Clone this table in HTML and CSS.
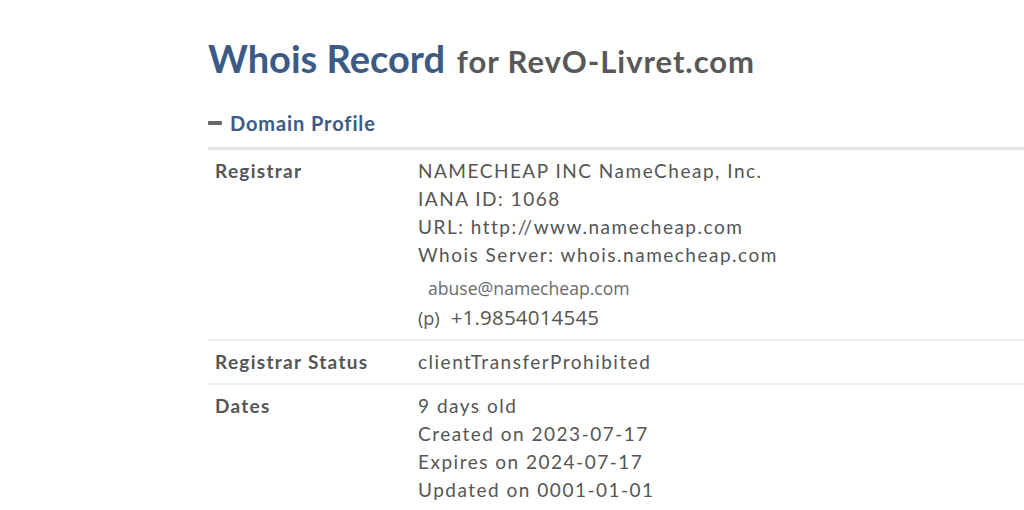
FILE: index.html
```html
<!DOCTYPE html>
<html>
<head>
<meta charset="utf-8">
<link rel="stylesheet" href="styles.css">
</head>
<body>
<div class="page">
  <h1 class="title"><span class="title-main">Whois Record</span> <span class="title-for">for RevO-Livret.com</span></h1>
  <div class="section-head">
    <span class="minus"></span>
    <span class="section-name">Domain Profile</span>
  </div>
  <div class="table">
    <div class="row">
      <div class="label">Registrar</div>
      <div class="value">
        <div class="line">NAMECHEAP INC NameCheap, Inc.</div>
        <div class="line">IANA ID: 1068</div>
        <div class="line">URL: http://www.namecheap.com</div>
        <div class="line">Whois Server: whois.namecheap.com</div>
        <div class="email">abuse@namecheap.com</div>
        <div class="phone"><span class="p">(p)</span><span class="num">+1.9854014545</span></div>
      </div>
    </div>
    <div class="row">
      <div class="label">Registrar Status</div>
      <div class="value">
        <div class="line">clientTransferProhibited</div>
      </div>
    </div>
    <div class="row">
      <div class="label">Dates</div>
      <div class="value">
        <div class="line">9 days old</div>
        <div class="line">Created on 2023-07-17</div>
        <div class="line">Expires on 2024-07-17</div>
        <div class="line">Updated on 0001-01-01</div>
      </div>
    </div>
  </div>
</div>
</body>
</html>
```
FILE: styles.css
```css
html, body {
  margin: 0;
  padding: 0;
  background: #fff;
  overflow: hidden;
}
body {
  font-family: Lato, "Open Sans", sans-serif;
  color: #555;
}
.page {
  padding: 35px 0 0 208px;
  width: 1000px;
}
.title {
  margin: 0;
  font-weight: 700;
  line-height: 46px;
}
.title-main {
  font-size: 38px;
  color: #3b5a85;
}
.title-for {
  font-size: 31px;
  color: #585858;
  margin-left: 4px;
  letter-spacing: 0.95px;
}
.section-head {
  margin-top: 25px;
  display: flex;
  align-items: center;
  height: 28px;
  padding-bottom: 10px;
  border-bottom: 3px solid #e2e2e2;
}
.minus {
  width: 14px;
  height: 4px;
  background: #666;
  border-radius: 1px;
  margin-right: 8px;
}
.section-name {
  font-size: 20px;
  font-weight: 700;
  color: #3b5a85;
  letter-spacing: 0.9px;
}
.row {
  display: flex;
  border-bottom: 2px solid #eee;
  padding: 7px 0 7px 7px;
}
.row:last-child {
  border-bottom: none;
}
.label {
  width: 203px;
  flex-shrink: 0;
  font-size: 19px;
  font-weight: 700;
  line-height: 28px;
  letter-spacing: 1.3px;
}
.value {
  font-size: 19px;
  line-height: 28px;
  letter-spacing: 1.5px;
  white-space: nowrap;
}
.email {
  font-family: "Open Sans", sans-serif;
  font-size: 17.6px;
  color: #6a6a6a;
  padding-left: 10px;
  margin-top: 4px;
  line-height: 30px;
  letter-spacing: 0;
}
.phone {
  line-height: 28px;
  display: flex;
  align-items: baseline;
}
.p {
  font-family: "Open Sans", sans-serif;
  font-size: 18px;
  letter-spacing: 0;
  margin-right: 11px;
}
.num {
  font-family: "Open Sans", sans-serif;
  font-size: 20.5px;
  letter-spacing: 0.2px;
}
```
